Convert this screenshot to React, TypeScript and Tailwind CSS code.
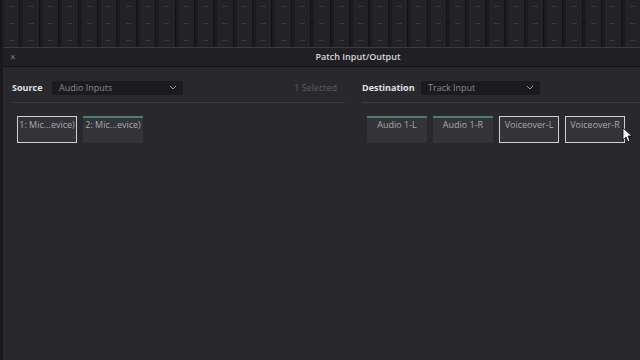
import React from "react";

const columns = Array.from({ length: 34 }, (_, i) => i);

function Tile({ label, selected }: { label: string; selected?: boolean }) {
  return (
    <div
      className={
        "w-[60px] h-[27px] bg-[#333338] flex justify-center text-[9px] leading-[14px] text-[#a9a9ad] " +
        (selected ? "border border-[#cfcfd2] pt-px" : "border-t-2 border-[#4f7d6c]")
      }
    >
      {label}
    </div>
  );
}

function Dropdown({ label, width }: { label: string; width: string }) {
  return (
    <div className={"h-[14px] bg-[#1b1b1f] flex items-center justify-between pl-[7px] pr-[6px] text-[9px] text-[#8a8a8f] " + width}>
      <span>{label}</span>
      <svg width="8" height="5" viewBox="0 0 8 5" fill="none">
        <path d="M1 1l3 3 3-3" stroke="#9a9a9e" strokeWidth="1" />
      </svg>
    </div>
  );
}

export default function App() {
  return (
    <div
      className="w-[640px] h-[360px] overflow-hidden bg-[#19191c] flex flex-col relative"
      style={{ fontFamily: '"Open Sans", "Noto Sans", sans-serif' }}
    >
      {/* mixer strips behind the dialog */}
      <div className="h-[47px] flex shrink-0 bg-[#232327]">
        {columns.map((i) => (
          <div key={i} className="w-[19.4px] shrink-0 h-full border-l border-[#121214] flex">
            <div className="w-[3px] h-full bg-[#1b1b1e]" />
            <div className="flex-1 flex flex-col items-center justify-between py-[6px]">
              <div className="w-[5px] h-px bg-[#38383d]" />
              <div className="w-[5px] h-px bg-[#38383d]" />
              <div className="w-[5px] h-px bg-[#38383d]" />
            </div>
          </div>
        ))}
      </div>

      {/* dialog */}
      <div className="flex-1 ml-[3px] w-[710px] flex flex-col border-t border-[#3a3a40] bg-[#28282d]">
        <div className="h-[19px] shrink-0 bg-[#1f1f24] border-b border-[#141417] flex items-center relative">
          <span className="absolute left-[7px] top-[2px] text-[10px] text-[#7c7c82]">×</span>
          <div className="flex-1 text-center text-[9px] font-semibold text-[#d8d8dc]">Patch Input/Output</div>
        </div>

        <div className="flex pt-[13px] pl-[9px] gap-[17px]">
          {/* source */}
          <div className="w-[333px] flex flex-col">
            <div className="h-[15px] flex items-center">
              <span className="text-[9px] font-bold text-[#e2e2e6] w-[40px]">Source</span>
              <Dropdown label="Audio Inputs" width="w-[131px]" />
              <span className="ml-auto mr-[8px] text-[9px] text-[#5e5e63]">1 Selected</span>
            </div>
            <div className="h-px bg-[#3a3a40] mt-[7px]" />
            <div className="flex gap-[6px] mt-[13px] pl-[5px]">
              <Tile label="1: Mic...evice)" selected />
              <Tile label="2: Mic...evice)" />
            </div>
          </div>

          {/* destination */}
          <div className="flex-1 flex flex-col">
            <div className="h-[15px] flex items-center">
              <span className="text-[9px] font-bold text-[#e2e2e6] w-[59px]">Destination</span>
              <Dropdown label="Track Input" width="w-[119px]" />
            </div>
            <div className="h-px bg-[#3a3a40] mt-[7px]" />
            <div className="flex gap-[6px] mt-[13px] pl-[5px]">
              <Tile label="Audio 1-L" />
              <Tile label="Audio 1-R" />
              <Tile label="Voiceover-L" selected />
              <Tile label="Voiceover-R" selected />
            </div>
          </div>
        </div>
      </div>

      {/* mouse cursor */}
      <svg className="absolute left-[622px] top-[127px]" width="10" height="16" viewBox="0 0 10 16">
        <path d="M1 1v12l3-3 2 5 2-1-2-5h4z" fill="#fff" stroke="#000" strokeWidth="0.8" />
      </svg>
    </div>
  );
}
